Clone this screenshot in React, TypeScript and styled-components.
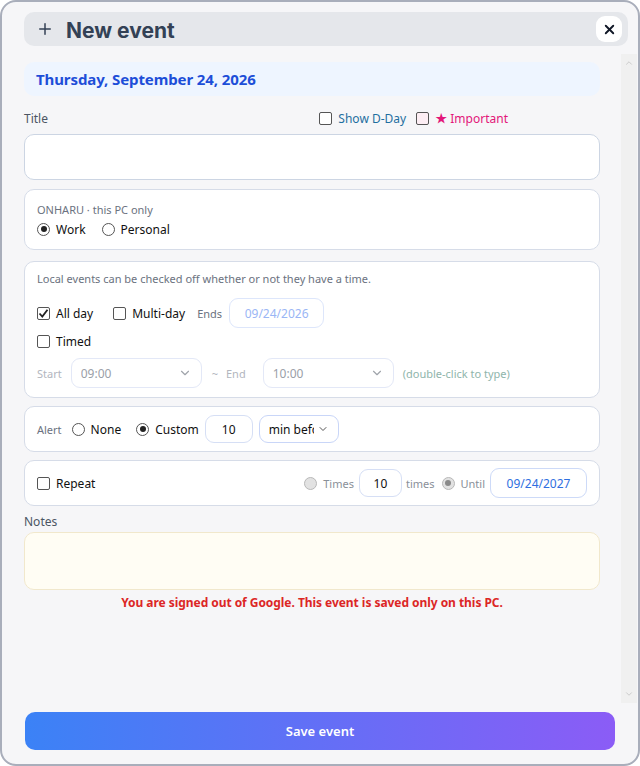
import styled, { createGlobalStyle } from "styled-components";
import { Plus, X, ChevronDown, ChevronUp } from "lucide-react";

const Global = createGlobalStyle`
  html, body { margin: 0; padding: 0; background: #fff; }
  body { font-family: "Noto Sans", "Noto Sans CJK KR", sans-serif; }
  * { box-sizing: border-box; }
`;

const Window = styled.div`
  width: 640px;
  height: 766px;
  border: 2px solid #a9aebb;
  border-radius: 16px;
  background: #f6f6f8;
  display: flex;
  flex-direction: column;
  overflow: hidden;
`;

const Header = styled.div`
  margin: 10px 10px 0 22px;
  height: 34px;
  border-radius: 10px;
  background: #e5e7eb;
  display: flex;
  align-items: center;
  padding: 0 6px 0 12px;
  gap: 12px;
  color: #334155;
`;

const HeaderTitle = styled.div`
  flex: 1;
  font-family: Inter, "Noto Sans", sans-serif;
  font-size: 21px;
  font-weight: 700;
  line-height: 1;
  padding-top: 3px;
  color: #334155;
`;

const CloseButton = styled.button`
  width: 26px;
  height: 26px;
  border: none;
  border-radius: 9px;
  background: #fff;
  display: grid;
  place-items: center;
  padding: 0;
  color: #111827;
`;

const Body = styled.div`
  flex: 1;
  display: flex;
  margin-top: 8px;
  min-height: 0;
`;

const Content = styled.div`
  flex: 1;
  padding: 8px 21px 0 22px;
  display: flex;
  flex-direction: column;
`;

const ScrollTrack = styled.div`
  width: 16px;
  margin-right: 1px;
  background: #f0f0f0;
  display: flex;
  flex-direction: column;
  justify-content: space-between;
  align-items: center;
  padding: 4px 0 4px;
  color: #c4c4c4;
`;

const DateBar = styled.div`
  height: 34px;
  border-radius: 10px;
  background: #eef5ff;
  display: flex;
  align-items: center;
  padding: 0 12px;
  font-size: 15px;
  font-weight: 700;
  letter-spacing: -0.1px;
  color: #1d4ed8;
`;

const LabelRow = styled.div`
  margin-top: 12px;
  height: 20px;
  display: flex;
  align-items: center;
`;

const FieldLabel = styled.div`
  flex: 1;
  font-size: 12px;
  color: #4b5563;
`;

const Check = styled.label<{ $tone?: string }>`
  display: inline-flex;
  align-items: center;
  gap: 6px;
  font-size: 12px;
  color: ${(p) => p.$tone || "#111"};
  white-space: nowrap;
`;

const Box = styled.span<{ $bg?: string }>`
  width: 13px;
  height: 13px;
  border: 1px solid #555;
  border-radius: 2px;
  background: ${(p) => p.$bg || "#fff"};
  display: grid;
  place-items: center;
`;

const Radio = styled.span<{ $on?: boolean; $disabled?: boolean }>`
  width: 13px;
  height: 13px;
  border-radius: 50%;
  border: 1px solid ${(p) => (p.$disabled ? "#b8b8b8" : "#555")};
  background: ${(p) => (p.$disabled ? "#e2e2e2" : "#fff")};
  display: grid;
  place-items: center;
  &::after {
    content: "";
    width: 6px;
    height: 6px;
    border-radius: 50%;
    background: ${(p) => (p.$disabled ? "#8a8a8a" : "#222")};
    display: ${(p) => (p.$on ? "block" : "none")};
  }
`;

const TitleInput = styled.div`
  margin-top: 6px;
  height: 46px;
  background: #fff;
  border: 1px solid #ccd5e3;
  border-radius: 10px;
`;

const Card = styled.div<{ $h: number; $mt?: number }>`
  margin-top: ${(p) => p.$mt ?? 9}px;
  height: ${(p) => p.$h}px;
  background: #fff;
  border: 1px solid #d6dce8;
  border-radius: 10px;
  padding: 0 12px;
  display: flex;
  flex-direction: column;
  justify-content: center;
`;

const Hint = styled.div`
  font-size: 11px;
  color: #6b7280;
`;

const Row = styled.div<{ $gap?: number; $mt?: number }>`
  display: flex;
  align-items: center;
  gap: ${(p) => p.$gap ?? 16}px;
  margin-top: ${(p) => p.$mt ?? 0}px;
`;

const Small = styled.span<{ $c?: string }>`
  font-size: 11px;
  color: ${(p) => p.$c || "#6b7280"};
  white-space: nowrap;
`;

const Field = styled.div<{ $w: number; $h?: number; $c?: string; $b?: string; $align?: string }>`
  width: ${(p) => p.$w}px;
  height: ${(p) => p.$h ?? 30}px;
  border: 1px solid ${(p) => p.$b || "#dde6fb"};
  border-radius: 9px;
  background: #fff;
  display: flex;
  align-items: center;
  justify-content: ${(p) => p.$align || "center"};
  padding: 0 9px;
  font-size: 12px;
  color: ${(p) => p.$c || "#111"};
  overflow: hidden;
  white-space: nowrap;
  gap: 3px;
`;

const FieldText = styled.span`
  flex: 1;
  overflow: hidden;
`;

const Spacer = styled.div`
  flex: 1;
`;

const NotesLabel = styled.div`
  margin-top: 7px;
  font-size: 12px;
  color: #4b5563;
`;

const Notes = styled.div`
  margin-top: 2px;
  height: 58px;
  border-radius: 10px;
  background: #fffdf4;
  border: 1px solid #f1e8cc;
`;

const Warning = styled.div`
  margin-top: 4px;
  text-align: center;
  font-size: 12px;
  font-weight: 700;
  letter-spacing: -0.05px;
  color: #dc2626;
`;

const Footer = styled.div`
  padding: 9px 23px 14px 23px;
`;

const SaveButton = styled.button`
  width: 100%;
  height: 38px;
  border: none;
  border-radius: 10px;
  background: linear-gradient(90deg, #3b82f6, #8b5cf6);
  color: #fff;
  font-family: "Noto Sans", sans-serif;
  font-size: 13px;
  font-weight: 600;
`;

const Tick = () => (
  <svg width="11" height="11" viewBox="0 0 11 11">
    <path d="M1.5 5.5 L4.3 8.5 L9.5 1.8" fill="none" stroke="#222" strokeWidth="1.8" />
  </svg>
);

export default function App() {
  return (
    <>
      <Global />
      <Window>
        <Header>
          <Plus size={18} strokeWidth={2} />
          <HeaderTitle>New event</HeaderTitle>
          <CloseButton>
            <X size={15} strokeWidth={3} />
          </CloseButton>
        </Header>
        <Body>
          <Content>
            <DateBar>Thursday, September 24, 2026</DateBar>

            <LabelRow>
              <FieldLabel>Title</FieldLabel>
              <Row $gap={10}>
                <Check $tone="#1f6fa0">
                  <Box />
                  Show D-Day
                </Check>
                <Check $tone="#e3177a">
                  <Box $bg="#fdeef4" />
                  ★ Important
                </Check>
              </Row>
              <div style={{ width: 92 }} />
            </LabelRow>
            <TitleInput />

            <Card $h={61}>
              <Hint>ONHARU · this PC only</Hint>
              <Row $mt={4}>
                <Check>
                  <Radio $on />
                  Work
                </Check>
                <Check>
                  <Radio />
                  Personal
                </Check>
              </Row>
            </Card>

            <Card $h={137} $mt={11}>
              <Hint>Local events can be checked off whether or not they have a time.</Hint>
              <Row $mt={12} $gap={0}>
                <Check>
                  <Box>
                    <Tick />
                  </Box>
                  All day
                </Check>
                <div style={{ width: 20 }} />
                <Check>
                  <Box />
                  Multi-day
                </Check>
                <Small style={{ margin: "0 7px 0 12px" }}>Ends</Small>
                <Field $w={95} $c="#9ab6f5">
                  09/24/2026
                </Field>
              </Row>
              <Row $mt={5}>
                <Check>
                  <Box />
                  Timed
                </Check>
              </Row>
              <Row $mt={8} $gap={0}>
                <Small $c="#b2b6be" style={{ marginRight: 9 }}>Start</Small>
                <Field $w={131} $c="#9aa0a8" $b="#e3e8f7" $align="space-between">
                  <FieldText>09:00</FieldText>
                  <ChevronDown size={14} color="#a0a4ab" />
                </Field>
                <Small $c="#b2b6be" style={{ margin: "0 8px 0 10px" }}>~</Small>
                <Small $c="#b2b6be" style={{ marginRight: 17 }}>End</Small>
                <Field $w={131} $c="#9aa0a8" $b="#e3e8f7" $align="space-between">
                  <FieldText>10:00</FieldText>
                  <ChevronDown size={14} color="#a0a4ab" />
                </Field>
                <Small $c="#8fb5ab" style={{ marginLeft: 9 }}>(double-click to type)</Small>
              </Row>
            </Card>

            <Card $h={46} $mt={8}>
              <Row $gap={0}>
                <Small style={{ marginRight: 10 }}>Alert</Small>
                <Check>
                  <Radio />
                  None
                </Check>
                <div style={{ width: 15 }} />
                <Check>
                  <Radio $on />
                  Custom
                </Check>
                <div style={{ width: 6 }} />
                <Field $w={48} $h={28} $b="#d6dff5">
                  10
                </Field>
                <div style={{ width: 6 }} />
                <Field $w={80} $h={28} $b="#c9d6f8" $align="flex-start">
                  <FieldText>min before</FieldText>
                  <ChevronDown size={12} color="#555" />
                </Field>
              </Row>
            </Card>

            <Card $h={46} $mt={8}>
              <Row $gap={0}>
                <Check>
                  <Box />
                  Repeat
                </Check>
                <Spacer />
                <Check>
                  <Radio $disabled />
                  <Small $c="#8a9099">Times</Small>
                </Check>
                <div style={{ width: 5 }} />
                <Field $w={43} $h={28} $b="#d6dff5">
                  10
                </Field>
                <Small $c="#8a9099" style={{ margin: "0 7px 0 4px" }}>times</Small>
                <Check>
                  <Radio $disabled $on />
                  <Small $c="#8a9099">Until</Small>
                </Check>
                <div style={{ width: 5 }} />
                <Field $w={97} $h={30} $c="#2f6fe0" $b="#cddaf8">
                  09/24/2027
                </Field>
              </Row>
            </Card>

            <NotesLabel>Notes</NotesLabel>
            <Notes />
            <Warning>You are signed out of Google. This event is saved only on this PC.</Warning>
          </Content>
          <ScrollTrack>
            <ChevronUp size={10} />
            <ChevronDown size={10} />
          </ScrollTrack>
        </Body>
        <Footer>
          <SaveButton>Save event</SaveButton>
        </Footer>
      </Window>
    </>
  );
}
